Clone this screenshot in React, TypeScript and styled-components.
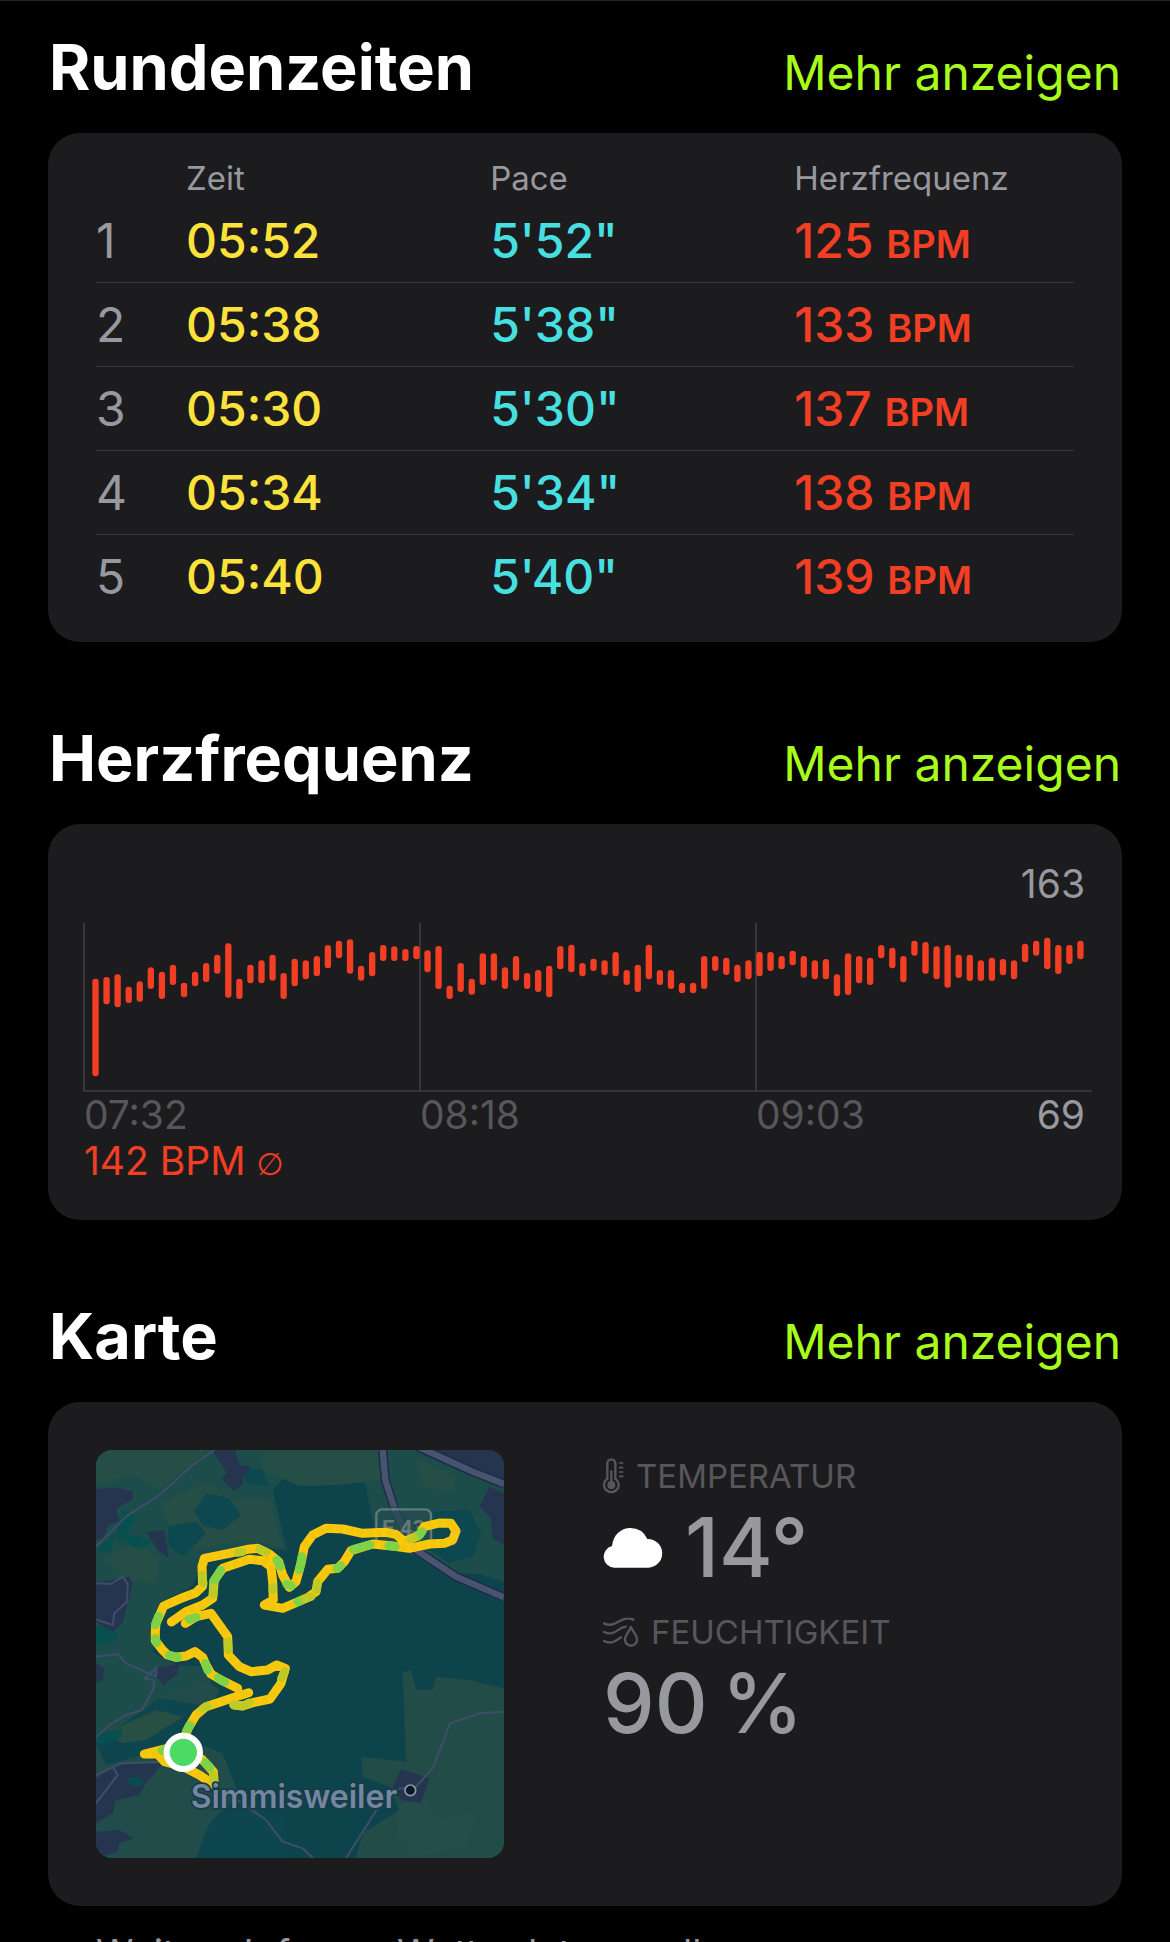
import React from "react";
import styled, { createGlobalStyle } from "styled-components";

const color = {
  card: "#1c1c1e",
  line: "#38383a",
  text: "#ffffff",
  muted: "#98989f",
  dim: "#57575b",
  link: "#a9fb1b",
  time: "#fde23c",
  pace: "#48dfe0",
  heart: "#f23f24",
};

const GlobalStyle = createGlobalStyle`
  * { box-sizing: border-box; }
  body {
    margin: 0;
    background: #000;
    color: ${color.text};
    font-family: Inter, "Liberation Sans", sans-serif;
  }
`;

const Page = styled.main`
  height: 100vh;
  overflow-y: auto;
  scrollbar-width: none;
  padding: 0 48px 48px;
  border-top: 1px solid #262626;
`;

const Section = styled.section`
  padding-top: 24px;
  & + & {
    padding-top: 74px;
  }
`;

const SectionHead = styled.header`
  display: flex;
  align-items: baseline;
  justify-content: space-between;
  height: 108px;
  padding: 2px 1px 0;
`;

const Title = styled.h2`
  margin: 0;
  font-size: 63px;
  line-height: 80px;
  font-weight: 700;
`;

const MoreLink = styled.a`
  color: ${color.link};
  font-size: 48px;
  line-height: 64px;
  text-decoration: none;
`;

const Card = styled.div<{ $pad: string }>`
  background: ${color.card};
  border-radius: 32px;
  padding: ${(p) => p.$pad};
`;

/* Lap table */

const LapTable = styled.table`
  width: 100%;
  table-layout: fixed;
  border-collapse: collapse;
  text-align: left;
`;

const Col = styled.col<{ $w?: string }>`
  width: ${(p) => p.$w ?? "auto"};
`;

const HeadCell = styled.th`
  height: 41px;
  padding: 0;
  color: ${color.muted};
  font-size: 33px;
  line-height: 40px;
  font-weight: 400;
`;

const LapRow = styled.tr`
  & + & {
    border-top: 1px solid ${color.line};
  }
`;

const LapCell = styled.td<{ $color: string; $weight?: number }>`
  height: 84px;
  padding: 2px 0 0;
  color: ${(p) => p.$color};
  font-size: 48px;
  line-height: 64px;
  font-weight: ${(p) => p.$weight ?? 500};
`;

const Unit = styled.span`
  font-size: 38px;
  line-height: 40px;
  font-weight: 600;
`;

/* Heart rate */

const MaxValue = styled.div`
  padding-right: 7px;
  color: ${color.muted};
  font-size: 39px;
  line-height: 48px;
  text-align: right;
`;

const Plot = styled.svg`
  display: block;
  width: 100%;
  margin-top: 15px;
  overflow: visible;
`;

const TimeAxis = styled.div`
  display: grid;
  grid-template-columns: repeat(3, 1fr);
  color: ${color.dim};
  font-size: 39px;
  line-height: 44px;
`;

const Tick = styled.div`
  display: flex;
  justify-content: space-between;
  padding-right: 7px;
`;

const MinValue = styled.span`
  color: ${color.muted};
`;

const Average = styled.div`
  color: ${color.heart};
  font-size: 39px;
  line-height: 48px;
`;

const AverageSign = styled.span`
  font-family: "DejaVu Sans", sans-serif;
  font-size: 31px;
  line-height: 32px;
`;

/* Map and weather */

const MapLayout = styled.div`
  display: flex;
  align-items: flex-start;
  gap: 99px;
`;

const MapTile = styled.svg`
  display: block;
  flex: 0 1 408px;
  min-width: 0;
  aspect-ratio: 1;
  border-radius: 16px;
`;

const Weather = styled.dl`
  flex: 1;
  margin: 0;
`;

const Label = styled.dt`
  display: flex;
  align-items: center;
  gap: 12px;
  color: ${color.dim};
  font-size: 33px;
  line-height: 52px;
`;

const Value = styled.dd`
  display: flex;
  align-items: center;
  gap: 22px;
  margin: 0 0 12px;
  color: ${color.muted};
  font-size: 82px;
  line-height: 92px;
  font-weight: 500;
`;

const Source = styled.a`
  display: block;
  padding: 25px 48px 0;
  color: ${color.muted};
  font-size: 38px;
  line-height: 44px;
  text-decoration: none;
`;

const laps = [
  ["1", "05:52", "5'52\"", "125"],
  ["2", "05:38", "5'38\"", "133"],
  ["3", "05:30", "5'30\"", "137"],
  ["4", "05:34", "5'34\"", "138"],
  ["5", "05:40", "5'40\"", "139"],
];

// Highest and lowest reading per sample, in thirds of a pixel.
const samples: [number, number][] = [
  [296, 589], [291, 373], [283, 382], [320, 369], [304, 365], [262, 327],
  [275, 357], [254, 315], [308, 352], [275, 319], [249, 306], [224, 281],
  [190, 353], [296, 357], [254, 310], [241, 310], [224, 302], [279, 357],
  [236, 319], [241, 298], [228, 289], [195, 265], [182, 235], [178, 281],
  [257, 302], [216, 289], [195, 243], [199, 243], [207, 243], [198, 238],
  [211, 277], [198, 327], [317, 357], [249, 336], [296, 344], [220, 315],
  [220, 302], [262, 327], [228, 302], [279, 327], [270, 336], [257, 352],
  [198, 268], [194, 277], [249, 289], [236, 273], [241, 285], [216, 289],
  [270, 315], [254, 336], [194, 298], [270, 315], [270, 327], [308, 340],
  [308, 340], [228, 327], [228, 273], [233, 285], [254, 306], [241, 298],
  [216, 289], [216, 273], [228, 268], [212, 256], [228, 293], [241, 298],
  [237, 298], [283, 349], [220, 345], [228, 310], [233, 315], [195, 235],
  [203, 265], [228, 307], [182, 227], [186, 281], [199, 298], [195, 323],
  [224, 294], [224, 303], [241, 303], [233, 303], [237, 286], [241, 298],
  [191, 247], [182, 227], [173, 268], [195, 282], [195, 252], [182, 238],
];

function HeartPlot() {
  return (
    <Plot viewBox="0 0 3024 510" role="img" aria-label="Herzfrequenzverlauf">
      <path
        d="M0 0V504M1008 0V504M2016 0V504M-2 504H3024"
        stroke="#3e3e42"
        strokeWidth="5"
        fill="none"
      />
      {samples.map(([top, bottom], i) => (
        <rect
          key={i}
          x={25 + i * 33.2}
          y={top - 129}
          width="19"
          height={bottom - top}
          rx="9"
          fill={color.heart}
        />
      ))}
    </Plot>
  );
}

const routeMain =
  "M262 870L278 832 300 795 330 770 375 755 415 742 458 728M425 715L375 690 345 672 330 645 320 622 297 605 270 618 240 622 215 615 198 598 178 572 178 545 180 520 203 468 255 445 300 428 320 408 318 350 325 325 400 310 455 298 485 295 520 312 548 335 560 375 580 412 600 395 615 340 625 290 650 255 690 235 740 237 800 250 870 247 900 253 925 275 970 255 985 230 1030 219 1065 220 1080 243 1070 270 1045 280 1000 282 940 295 890 288 830 282 765 302 745 335 725 355 695 358 665 395 660 425 635 443 600 458 560 475 505 465 532 450 530 395 525 350 500 332 460 328 380 355 355 390 350 445 320 465 270 485 226 516M268 520L300 500 345 490 395 560 397 615 430 650 465 665 515 660 542 645 568 655 555 700 522 747 470 758 440 768 415 765M262 905L205 897 145 912 185 912 205 935 262 950 310 975 355 1005 352 965 320 930 285 905";

const routeFast =
  "M272 842L282 826M335 660L328 640M386 696L366 684M245 622L220 616M182 578L178 565M178 525L188 498M542 330L553 350M572 402L586 408M610 360L618 320M822 284L772 298M898 290L878 287M965 260L978 245M734 348L722 355M622 448L606 455M374 360L356 392M352 405L352 395M280 508L300 502M198 902L208 897M328 938L342 952";

const routeMedium =
  "M322 400L318 375M352 435L351 412M396 575L397 600M566 665L556 685M412 765L440 768 460 758M425 308L440 305M490 297L510 306M625 446L645 440M352 975L355 1002M320 776L335 768M662 420L664 400M530 420L531 410M945 268L955 264";

function RouteMap() {
  return (
    <MapTile viewBox="0 0 1224 1224" role="img" aria-label="Karte der Strecke">
      <rect width="1224" height="1224" fill="#0d444c" />
      <path
        d="M0 0H1224V395L1150 372 1060 370 980 320 880 300 830 215 808 100 765 76 720 105 610 108 560 85 530 120 572 300 480 290 320 320 290 405 200 455 170 520 172 610 240 645 335 650 345 705 230 745 60 900 0 935Z"
        fill="#1c4d4b"
      />
      <path
        d="M500 0H850L862 90 720 105 610 108 500 60ZM0 0H340L190 120 110 70 0 110ZM190 160L330 95 420 150 520 150 560 290 440 270 300 300 220 230ZM20 330L120 270 190 330 180 400 100 390ZM960 20L1080 80 1070 130 980 110Z"
        fill="#254e47"
      />
      <path
        d="M330 130L400 145 435 195 380 240 320 225 295 185ZM215 230L300 215 330 250 260 320 220 290ZM1010 185L1120 180 1155 250 1130 320 1060 340 990 290ZM440 50L500 60 520 110 450 100Z"
        fill="#0d474f"
      />
      <path
        d="M0 880L90 790 200 740 330 690 370 720 340 780 240 880 330 890 380 910 400 960 430 1040 350 1110 300 1224H0Z"
        fill="#214c49"
      />
      <path
        d="M920 668L945 660 960 720 1010 720 1020 680 1120 690 1224 715V1224H780L800 1150 910 1080 880 1010 800 980 795 920 930 935Z"
        fill="#224c48"
      />
      <path
        d="M910 1060L990 1040 1030 1110 1140 1090 1110 1190 960 1224 900 1150Z"
        fill="#234e4a"
      />
      <path d="M0 880L190 745 340 770 200 900 30 945ZM420 1080L560 1090 580 1224H300L340 1120Z" fill="#0d464e" />
      <path d="M30 850L180 780 260 800 150 870 80 880Z" fill="#274f44" />
      <path
        d="M80 180L125 200 90 250 170 270 130 300 60 260ZM0 300L60 250 40 310ZM0 530L60 540 65 570 0 590ZM0 855L75 835 80 860 10 885Z"
        fill="#07504f"
      />
      <path
        d="M348 0H418L430 45 465 50 440 85 442 100 415 122 375 88 392 70ZM0 118L60 112 112 125 108 150 60 175 70 215 35 225 25 265 0 270ZM150 245L205 240 218 325 185 300ZM965 0H1224V98L1100 65ZM1180 110L1224 130V285L1190 265 1185 205 1150 170ZM0 398L100 380 110 400 80 520 50 545 0 515ZM180 655L250 640 245 670 205 705 180 680ZM0 640L25 655 20 690 0 700ZM0 985L60 945 200 940 150 1000 130 1035 60 1050 50 1090 0 1120ZM0 1145L70 1140 115 1165 70 1180 65 1205 0 1224ZM915 958L1000 985 975 1060 915 1050 890 1010Z"
        fill="#26354f"
      />
      <path d="M85 985L130 980 150 1005 115 1012Z" fill="#0a4a50" />
      <path
        d="M355 0L290 45 190 135 90 200 0 290M0 400L45 402 80 380 95 402 93 455 55 490 50 525 0 508M0 620L65 612 90 640 180 680 182 652 145 686 172 690 175 710 138 780 90 795 40 825 0 862M0 975L75 940 190 935M50 950L65 975 0 1060M425 1050L510 1110 560 1175 620 1195 650 1224M750 1224L880 1020 960 1010 1010 955 1062 820 1150 790 1224 785"
        fill="none"
        stroke="#404d6a"
        strokeWidth="6"
        strokeLinejoin="round"
      />
      <g fill="none" strokeLinejoin="round">
        <path d="M860 0L868 90 900 190 960 300 1080 380 1224 442M965-10L1130 65 1224 102" stroke="#1e2c47" strokeWidth="28" />
        <path d="M860 0L868 90 900 190 960 300 1080 380 1224 442M965-10L1130 65 1224 102" stroke="#47536f" strokeWidth="19" />
      </g>
      <g opacity=".75">
        <rect x="841" y="178" width="164" height="116" rx="18" fill="#244d50" stroke="#1d4d4c" strokeWidth="18" />
        <rect x="841" y="178" width="164" height="116" rx="18" fill="#244d50" stroke="#758b8a" strokeWidth="7" />
        <text x="923" y="258" fill="#788b89" fontSize="66" fontWeight="700" textAnchor="middle" fontFamily="Roboto, sans-serif">
          E 43
        </text>
      </g>
      <g fill="none" strokeLinecap="round" strokeLinejoin="round">
        <path d={routeMain} stroke="#ffc80a" strokeWidth="27" />
        <path d={routeFast} stroke="#73d64e" strokeWidth="26" />
        <path d={routeMedium} stroke="#bdcd28" strokeWidth="25" />
        <path d={routeMain} stroke="#c9bf1c" strokeOpacity=".25" strokeWidth="21" strokeDasharray="1 29" />
      </g>
      <text
        x="284"
        y="1075"
        fill="#7486a0"
        stroke="#163c47"
        strokeWidth="10"
        paintOrder="stroke"
        fontSize="96"
        fontWeight="600"
        fontFamily="Inter, sans-serif"
      >
        Simmisweiler
      </text>
      <circle cx="943" cy="1021" r="16" fill="#0d1825" stroke="#8a9bb0" strokeWidth="5" />
      <circle cx="262" cy="907" r="50" fill="#4cd964" stroke="#fff" strokeWidth="18" />
    </MapTile>
  );
}

function Thermometer() {
  return (
    <svg width="21" height="36" viewBox="0 0 63 108" fill="none" stroke="currentColor" strokeWidth="7" aria-hidden="true">
      <path d="M13 62V16a12 12 0 0 1 24 0V62a22 22 0 1 1-24 0Z" />
      <path d="M25 40V76" strokeLinecap="round" />
      <circle cx="25" cy="81" r="12" fill="currentColor" stroke="none" />
      <path d="M48 15H61M48 29H61M48 42H61M48 55H61" strokeWidth="5" />
    </svg>
  );
}

function Humidity() {
  return (
    <svg width="36" height="30" viewBox="0 0 108 90" fill="none" stroke="currentColor" strokeWidth="7" strokeLinecap="round" strokeLinejoin="round" aria-hidden="true">
      <path d="M3 19C34 34 48 4 74 5Q84 5 91 8M3 45C34 60 44 32 68 29M3 72C26 83 38 72 54 61" />
      <path d="M84 30C79 43 66 54 66 68a18 18 0 0 0 36 0C102 54 89 43 84 30Z" />
    </svg>
  );
}

function Cloud() {
  return (
    <svg width="60" height="40" viewBox="0 0 180 120" fill="#fff" role="img" aria-label="Bewölkt">
      <path d="M34 119A33 33 0 0 1 27 54C30 22 53 0 82 0Q118 0 133 33A43 43 0 0 1 136 119Z" />
    </svg>
  );
}

function SectionHeader({ title }: { title: string }) {
  return (
    <SectionHead>
      <Title>{title}</Title>
      <MoreLink href="#">Mehr anzeigen</MoreLink>
    </SectionHead>
  );
}

export default function App() {
  return (
    <>
      <GlobalStyle />
      <Page>
        <Section>
          <SectionHeader title="Rundenzeiten" />
          <Card $pad="24px 48px">
            <LapTable>
              <colgroup>
                <Col $w="9.2%" />
                <Col $w="31.1%" />
                <Col $w="31.1%" />
                <Col />
              </colgroup>
              <thead>
                <tr>
                  <HeadCell aria-label="Runde" />
                  <HeadCell scope="col">Zeit</HeadCell>
                  <HeadCell scope="col">Pace</HeadCell>
                  <HeadCell scope="col">Herzfrequenz</HeadCell>
                </tr>
              </thead>
              <tbody>
                {laps.map(([lap, time, pace, bpm]) => (
                  <LapRow key={lap}>
                    <LapCell $color={color.muted} $weight={400}>{lap}</LapCell>
                    <LapCell $color={color.time}>{time}</LapCell>
                    <LapCell $color={color.pace}>{pace}</LapCell>
                    <LapCell $color={color.heart}>
                      {bpm} <Unit>BPM</Unit>
                    </LapCell>
                  </LapRow>
                ))}
              </tbody>
            </LapTable>
          </Card>
        </Section>

        <Section>
          <SectionHeader title="Herzfrequenz" />
          <Card $pad="36px 30px 35px 36px">
            <MaxValue>163</MaxValue>
            <HeartPlot />
            <TimeAxis>
              <Tick>07:32</Tick>
              <Tick>08:18</Tick>
              <Tick>
                09:03 <MinValue>69</MinValue>
              </Tick>
            </TimeAxis>
            <Average>
              142 BPM <AverageSign>∅</AverageSign>
            </Average>
          </Card>
        </Section>

        <Section>
          <SectionHeader title="Karte" />
          <Card $pad="48px">
            <MapLayout>
              <RouteMap />
              <Weather>
                <Label>
                  <Thermometer />
                  TEMPERATUR
                </Label>
                <Value>
                  <Cloud />
                  14°
                </Value>
                <Label>
                  <Humidity />
                  FEUCHTIGKEIT
                </Label>
                <Value>{"90\u2009%"}</Value>
              </Weather>
            </MapLayout>
          </Card>
          <Source href="#">Weitere Infos zu Wetterdatenquellen</Source>
        </Section>
      </Page>
    </>
  );
}
